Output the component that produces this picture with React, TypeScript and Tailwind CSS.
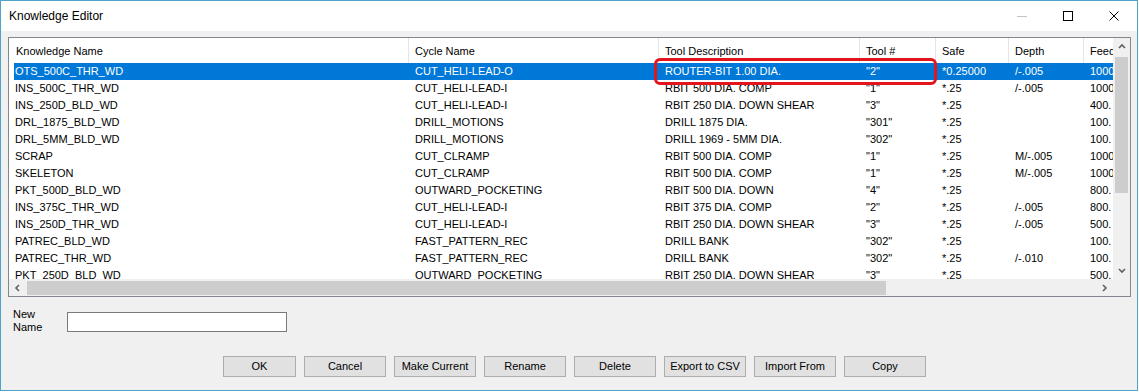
import React from 'react'

const COLS = [
  { name: 'Knowledge Name', w: 400 },
  { name: 'Cycle Name', w: 250 },
  { name: 'Tool Description', w: 201 },
  { name: 'Tool #', w: 76 },
  { name: 'Safe', w: 73 },
  { name: 'Depth', w: 75 },
  { name: 'Feed', w: 60 },
]

const ROWS: string[][] = [
  ['OTS_500C_THR_WD', 'CUT_HELI-LEAD-O', 'ROUTER-BIT 1.00 DIA.', '"2"', '*0.25000', '/-.005', '1000'],
  ['INS_500C_THR_WD', 'CUT_HELI-LEAD-I', 'RBIT 500 DIA. COMP', '"1"', '*.25', '/-.005', '1000'],
  ['INS_250D_BLD_WD', 'CUT_HELI-LEAD-I', 'RBIT 250 DIA. DOWN SHEAR', '"3"', '*.25', '', '400.'],
  ['DRL_1875_BLD_WD', 'DRILL_MOTIONS', 'DRILL 1875 DIA.', '"301"', '*.25', '', '100.'],
  ['DRL_5MM_BLD_WD', 'DRILL_MOTIONS', 'DRILL 1969 - 5MM DIA.', '"302"', '*.25', '', '100.'],
  ['SCRAP', 'CUT_CLRAMP', 'RBIT 500 DIA. COMP', '"1"', '*.25', 'M/-.005', '1000'],
  ['SKELETON', 'CUT_CLRAMP', 'RBIT 500 DIA. COMP', '"1"', '*.25', 'M/-.005', '1000'],
  ['PKT_500D_BLD_WD', 'OUTWARD_POCKETING', 'RBIT 500 DIA. DOWN', '"4"', '*.25', '', '800.'],
  ['INS_375C_THR_WD', 'CUT_HELI-LEAD-I', 'RBIT 375 DIA. COMP', '"2"', '*.25', '/-.005', '800.'],
  ['INS_250D_THR_WD', 'CUT_HELI-LEAD-I', 'RBIT 250 DIA. DOWN SHEAR', '"3"', '*.25', '/-.005', '500.'],
  ['PATREC_BLD_WD', 'FAST_PATTERN_REC', 'DRILL BANK', '"302"', '*.25', '', '100.'],
  ['PATREC_THR_WD', 'FAST_PATTERN_REC', 'DRILL BANK', '"302"', '*.25', '/-.010', '100.'],
  ['PKT_250D_BLD_WD', 'OUTWARD_POCKETING', 'RBIT 250 DIA. DOWN SHEAR', '"3"', '*.25', '', '500.'],
]

const BUTTONS = ['Cancel', 'Make Current', 'Rename', 'Delete', 'Export to CSV', 'Import From', 'Copy']

function Chevron({ dir }: { dir: 'up' | 'down' | 'left' | 'right' }) {
  const pts = {
    up: '1,5 4,2 7,5',
    down: '1,2 4,5 7,2',
    left: '5,1 2,4 5,7',
    right: '2,1 5,4 2,7',
  }[dir]
  const vertical = dir === 'up' || dir === 'down'
  return (
    <svg width={vertical ? 8 : 7} height={vertical ? 7 : 8} viewBox={vertical ? '0 0 8 7' : '0 0 7 8'}>
      <polyline points={pts} fill="none" stroke="#606060" strokeWidth={1.6} />
    </svg>
  )
}

export default function App() {
  return (
    <div className="w-[1139px] h-[392px] bg-white font-['Liberation_Sans',Arial,sans-serif] text-black">
      <div className="relative w-[1138px] h-[391px] border border-[#4fa3c9] flex flex-col">
        {/* Title bar */}
        <div className="h-[30px] bg-white flex items-center shrink-0">
          <span className="pl-[8px] text-[12px] flex-1">Knowledge Editor</span>
          <div className="flex h-full">
            <div className="w-[46px] h-full flex items-center justify-center">
              <div className="w-[10px] h-px bg-[#c4c4c4]" />
            </div>
            <div className="w-[46px] h-full flex items-center justify-center">
              <div className="w-[10px] h-[10px] border border-black" />
            </div>
            <div className="w-[46px] h-full flex items-center justify-center">
              <svg width="10" height="10" viewBox="0 0 10 10">
                <path d="M0.5 0.5 L9.5 9.5 M9.5 0.5 L0.5 9.5" stroke="#000" strokeWidth={1} />
              </svg>
            </div>
          </div>
        </div>

        {/* Client area */}
        <div className="flex-1 bg-[#f0f0f0] pt-[6px] px-[7px] text-[11px]">
          {/* List view */}
          <div className="w-[1123px] h-[260px] border border-[#828790] bg-white grid grid-cols-[1fr_17px] grid-rows-[1fr_17px]">
            <div className="overflow-hidden flex flex-col">
              <div className="h-[25px] flex shrink-0">
                {COLS.map((c, i) => (
                  <div
                    key={c.name}
                    style={{ width: c.w }}
                    className={`shrink-0 h-full flex items-center pt-[2px] whitespace-nowrap border-r border-[#e5e5e5] ${i === 0 ? 'pl-[7px]' : 'pl-[6px]'}`}
                  >
                    {c.name}
                  </div>
                ))}
              </div>
              {ROWS.map((r, ri) => (
                <div key={ri} className="h-[17px] flex shrink-0">
                  <div className={`ml-[5px] flex flex-1 ${ri === 0 ? 'bg-[#0078d7] text-white' : ''}`}>
                    {r.map((v, ci) => (
                      <div
                        key={ci}
                        style={{ width: ci === 0 ? COLS[0].w - 5 : COLS[ci].w }}
                        className={`shrink-0 h-full flex items-center whitespace-nowrap overflow-hidden ${ci === 0 ? 'pl-[1px]' : 'pl-[6px]'}`}
                      >
                        {v}
                      </div>
                    ))}
                  </div>
                </div>
              ))}
            </div>
            {/* Vertical scrollbar */}
            <div className="bg-[#f0f0f0] flex flex-col items-center">
              <div className="h-[17px] w-full flex items-center justify-center shrink-0">
                <Chevron dir="up" />
              </div>
              <div className="flex-1 w-full flex flex-col items-center">
                <div className="w-[13px] h-[136px] mt-[2px] bg-[#cdcdcd]" />
              </div>
              <div className="h-[17px] w-full flex items-center justify-center shrink-0">
                <Chevron dir="down" />
              </div>
            </div>
            {/* Horizontal scrollbar */}
            <div className="bg-[#f0f0f0] flex items-center">
              <div className="w-[17px] h-full flex items-center justify-center shrink-0">
                <Chevron dir="left" />
              </div>
              <div className="flex-1 h-full flex items-center">
                <div className="w-[859px] h-[14px] ml-[1px] bg-[#cdcdcd]" />
              </div>
              <div className="w-[17px] h-full flex items-center justify-center shrink-0">
                <Chevron dir="right" />
              </div>
            </div>
            <div className="bg-[#f0f0f0]" />
          </div>

          {/* New name */}
          <div className="flex items-start mt-[11px] ml-[5px]">
            <div className="w-[54px] leading-[13px]">
              New
              <br />
              Name
            </div>
            <div className="mt-[4px] w-[220px] h-[20px] bg-white border border-[#7a7a7a]" />
          </div>

          {/* Buttons */}
          <div className="flex gap-[8px] mt-[22px] ml-[215px]">
            <button className="w-[73px] h-[21px] bg-[#e1e1e1] border border-[#adadad] text-[11px] leading-none">
              OK
            </button>
            {BUTTONS.map((b) => (
              <button
                key={b}
                className="w-[82px] h-[21px] bg-[#e1e1e1] border border-[#adadad] text-[11px] leading-none"
              >
                {b}
              </button>
            ))}
          </div>
        </div>

        {/* Red highlight annotation */}
        <div className="absolute left-[653px] top-[57px] w-[283px] h-[27px] border-[3px] border-[#e2141c] rounded-[6px]" />
      </div>
    </div>
  )
}
